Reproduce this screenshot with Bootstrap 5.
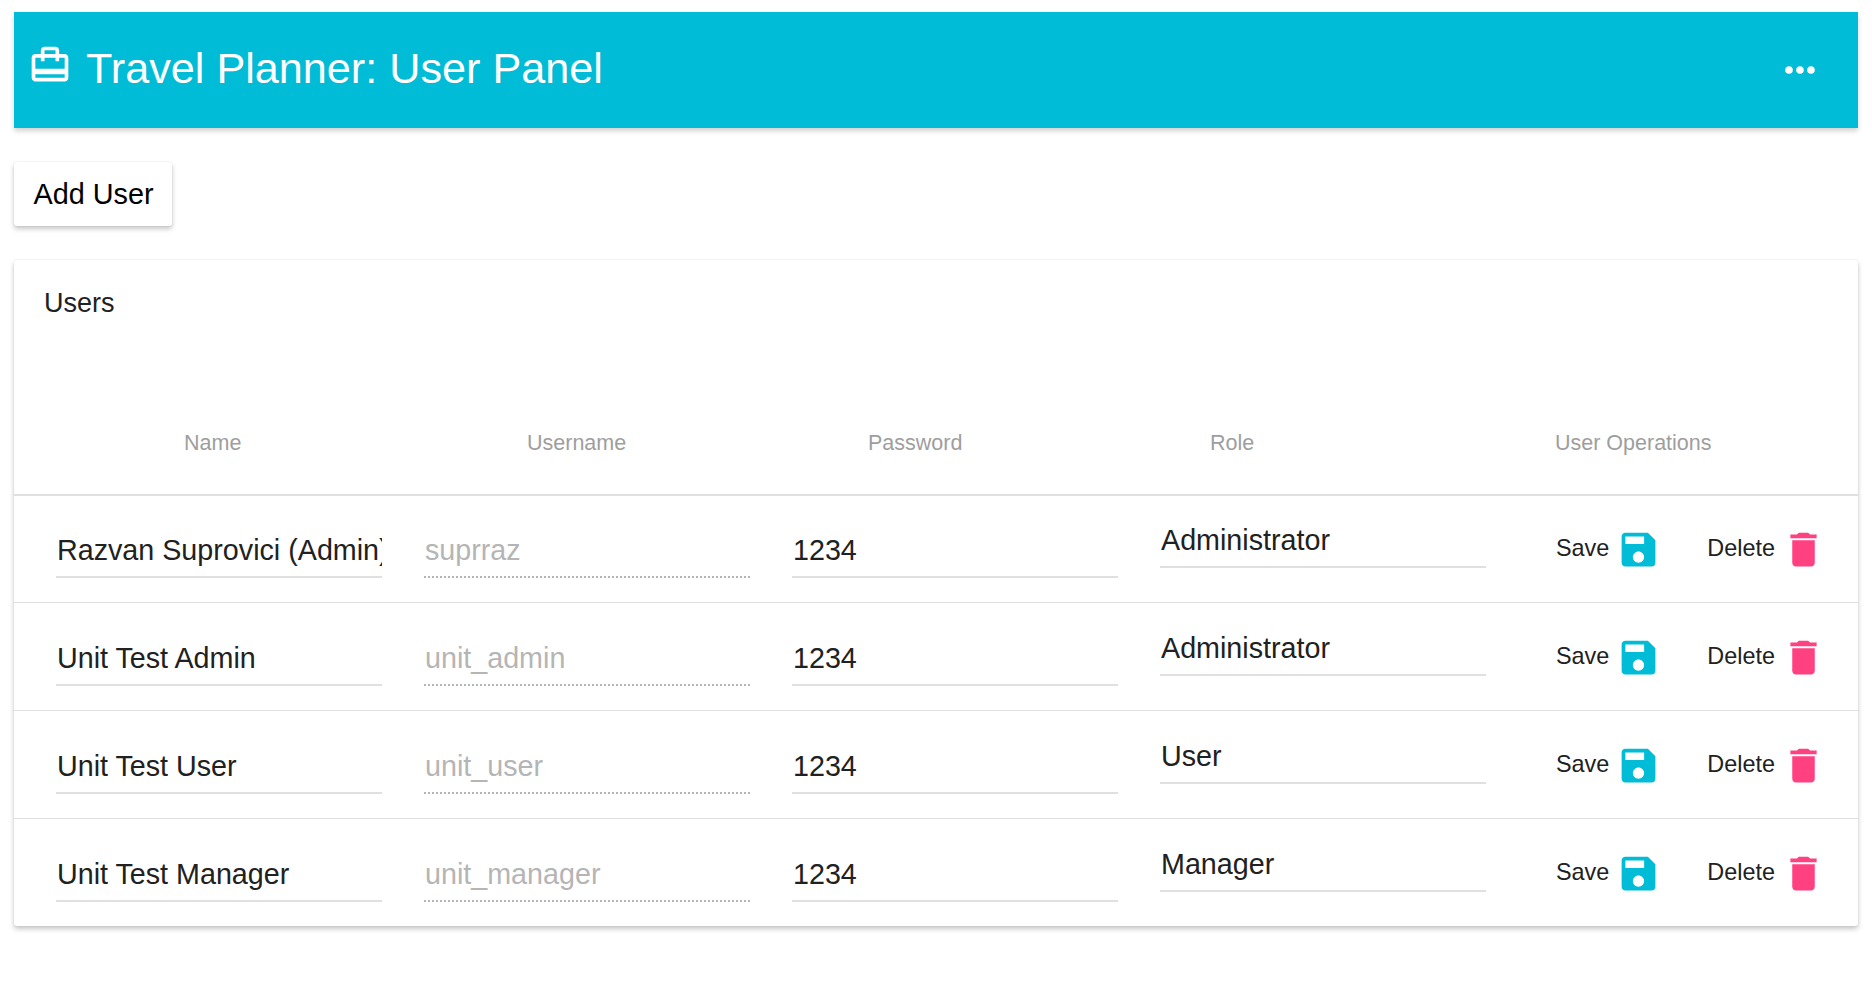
<!DOCTYPE html>
<html lang="en">
<head>
  <meta charset="UTF-8" />
  <meta name="viewport" content="width=device-width, initial-scale=1" />
  <title>Travel Planner: User Panel</title>
  <link href="https://cdn.jsdelivr.net/npm/bootstrap@5.3.2/dist/css/bootstrap.min.css" rel="stylesheet">
  <style>
    html, body {
      min-height: 100%;
    }
    body {
      font-family: "Liberation Sans", Arial, sans-serif;
      background: #fff;
      color: #212121;
      padding: 12px 14px 40px;
    }
    .app-bar {
      background: #00bcd6;
      height: 116px;
      padding: 0 43px 0 14px;
      box-shadow: 0 3px 5px rgba(0,0,0,.18);
    }
    .app-icon {
      margin-top: -9px;
    }
    .app-title {
      font-size: 43.2px;
      line-height: 1;
      color: #fff;
      margin: 0 0 2px 14px;
      font-weight: 400;
    }
    .add-btn {
      width: 158px;
      height: 64px;
      margin: 34px 0;
      padding: 2px 0 0 1px;
      font-size: 28.8px;
      color: #000;
      background: #fff;
      border: 0;
      border-radius: 3px;
      box-shadow: 0 3px 5px rgba(0,0,0,.22), 0 0 2px rgba(0,0,0,.1);
    }
    .users-card {
      border: 0;
      border-radius: 3px;
      box-shadow: 0 3px 5px rgba(0,0,0,.22), 0 0 2px rgba(0,0,0,.1);
    }
    .users-title {
      font-size: 27px;
      line-height: 32px;
      padding: 27px 0 0 30px;
      height: 150px;
    }
    .head-row {
      display: grid;
      grid-template-columns: 343px 341px 342px 345px auto;
      padding-left: 170px;
      height: 86px;
      border-bottom: 2px solid #e0e0e0;
      font-size: 21.5px;
      line-height: 66px;
      color: #9e9e9e;
    }
    .user-row {
      height: 108px;
      padding: 28px 0 0 42px;
      gap: 42px;
      border: 0;
      border-bottom: 2px solid #e0e0e0;
      background: transparent;
    }
    .user-row:first-child {
      height: 107px;
      padding-top: 27px;
    }
    .user-row:last-child {
      border-bottom: 0;
      height: 107px;
    }
    .field {
      width: 326px;
      height: 55px;
      padding: 2px 0 0 1px;
      font-size: 28.7px;
      color: #212121;
      background: transparent;
      border: 0;
      border-bottom: 2px solid #e0e0e0;
      border-radius: 0;
      box-shadow: none;
    }
    .field:disabled {
      color: #b5b5b5;
      background: transparent;
      border-bottom: 2px dotted #b5b5b5;
    }
    .role-field {
      margin-top: -10px;
    }
    .ops {
      margin: -1px 0 0 28px;
      gap: 46px;
      height: 54px;
    }
    .op-btn {
      padding: 0;
      border: 0;
      gap: 7px;
      font-size: 23.4px;
      color: #212121;
    }
    .save-icon { fill: #00bcd6; }
    .trash-icon { fill: #ff4081; margin-left: -1px; }
  </style>
</head>
<body>

<header class="navbar app-bar flex-nowrap">
  <div class="d-flex align-items-center">
    <svg class="app-icon" width="44" height="44" viewBox="0 0 24 24" fill="#fff"><path d="M20 6h-3V4c0-1.11-.89-2-2-2H9c-1.11 0-2 .89-2 2v2H4c-1.11 0-2 .89-2 2v11c0 1.11.89 2 2 2h16c1.11 0 2-.89 2-2V8c0-1.11-.89-2-2-2zM9 4h6v2H9V4zm11 15H4v-2h16v2zm0-5H4V8h3v2h2V8h6v2h2V8h3v6z"/></svg>
    <h1 class="app-title">Travel Planner: User Panel</h1>
  </div>
  <svg width="30" height="8" viewBox="0 0 30 8" fill="#fff"><circle cx="4" cy="4" r="3.8"/><circle cx="15" cy="4" r="3.8"/><circle cx="26" cy="4" r="3.8"/></svg>
</header>

<button class="btn add-btn d-block">Add User</button>

<div class="card users-card">
  <div class="users-title">Users</div>
  <div class="head-row">
    <div>Name</div>
    <div>Username</div>
    <div>Password</div>
    <div>Role</div>
    <div>User Operations</div>
  </div>
  <div class="list-group list-group-flush" id="userRows"></div>
</div>

<script>
const users = [
  ['Razvan Suprovici (Admin)', 'suprraz', 'Administrator'],
  ['Unit Test Admin', 'unit_admin', 'Administrator'],
  ['Unit Test User', 'unit_user', 'User'],
  ['Unit Test Manager', 'unit_manager', 'Manager']
];

const saveIcon = '<svg class="save-icon" width="45" height="45" viewBox="0 0 24 24"><path d="M17 3H5c-1.11 0-2 .9-2 2v14c0 1.1.89 2 2 2h14c1.1 0 2-.9 2-2V7l-4-4zm-5 16c-1.66 0-3-1.34-3-3s1.34-3 3-3 3 1.34 3 3-1.34 3-3 3zm3-10H5V5h10v4z"/></svg>';
const trashIcon = '<svg class="trash-icon" width="45" height="45" viewBox="0 0 24 24"><path d="M6 19c0 1.1.9 2 2 2h8c1.1 0 2-.9 2-2V7H6v12zM19 4h-3.5l-1-1h-5l-1 1H5v2h14V4z"/></svg>';

const container = document.getElementById('userRows');
users.forEach((u) => {
  const row = document.createElement('div');
  row.className = 'list-group-item user-row d-flex align-items-start';
  row.innerHTML = `
    <input class="form-control field" type="text" value="${u[0]}">
    <input class="form-control field" type="text" value="${u[1]}" disabled>
    <input class="form-control field" type="text" value="1234">
    <input class="form-control field role-field" type="text" value="${u[2]}">
    <div class="ops d-flex align-items-center">
      <button class="btn op-btn d-flex align-items-center">Save ${saveIcon}</button>
      <button class="btn op-btn d-flex align-items-center">Delete ${trashIcon}</button>
    </div>
  `;
  container.appendChild(row);
});
</script>
<script src="https://cdn.jsdelivr.net/npm/bootstrap@5.3.2/dist/js/bootstrap.bundle.min.js"></script>
</body>
</html>
